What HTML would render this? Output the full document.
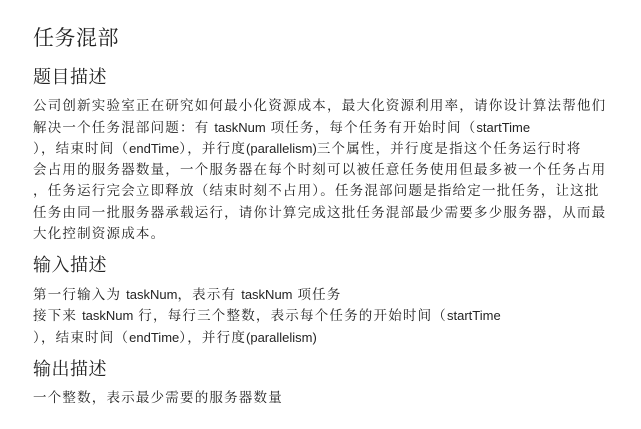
<!DOCTYPE html>
<html><head><meta charset="utf-8"><style>
body{margin:0;width:641px;height:429px;background:#fff;position:relative;overflow:hidden;color:#222;font-family:"Liberation Sans","Noto Serif CJK SC",serif}
div{position:absolute;left:33px;white-space:nowrap}
.t{font-size:21px;line-height:22px;font-family:"Noto Serif CJK SC",serif;letter-spacing:0.5px}
.h{font-size:18px;line-height:20px;font-family:"Noto Serif CJK SC",serif;letter-spacing:0.5px}
.p{font-size:13.5px;line-height:16px;letter-spacing:1.2px}
.p span{font-family:"Liberation Sans",sans-serif;letter-spacing:0;font-size:13px}
</style></head><body>
<div class="t" style="top:26px">任务混部</div>
<div class="h" style="top:66px">题目描述</div>
<div class="p" style="top:98px">公司创新实验室正在研究如何最小化资源成本，最大化资源利用率，请你设计算法帮他们</div>
<div class="p" style="top:120px">解决一个任务混部问题：有 <span>taskNum</span> 项任务，每个任务有开始时间（<span>startTime</span></div>
<div class="p" style="top:141px">），结束时间（<span>endTime</span>），并行度<span>(parallelism)</span>三个属性，并行度是指这个任务运行时将</div>
<div class="p" style="top:162px">会占用的服务器数量，一个服务器在每个时刻可以被任意任务使用但最多被一个任务占用</div>
<div class="p" style="top:183px">，任务运行完会立即释放（结束时刻不占用）。任务混部问题是指给定一批任务，让这批</div>
<div class="p" style="top:205px">任务由同一批服务器承载运行，请你计算完成这批任务混部最少需要多少服务器，从而最</div>
<div class="p" style="top:226px">大化控制资源成本。</div>
<div class="h" style="top:254px">输入描述</div>
<div class="p" style="top:287px">第一行输入为 <span>taskNum</span>，表示有 <span>taskNum</span> 项任务</div>
<div class="p" style="top:308px">接下来 <span>taskNum</span> 行，每行三个整数，表示每个任务的开始时间（<span>startTime</span></div>
<div class="p" style="top:330px">），结束时间（<span>endTime</span>），并行度<span>(parallelism)</span></div>
<div class="h" style="top:358px">输出描述</div>
<div class="p" style="top:390px">一个整数，表示最少需要的服务器数量</div>
</body></html>
